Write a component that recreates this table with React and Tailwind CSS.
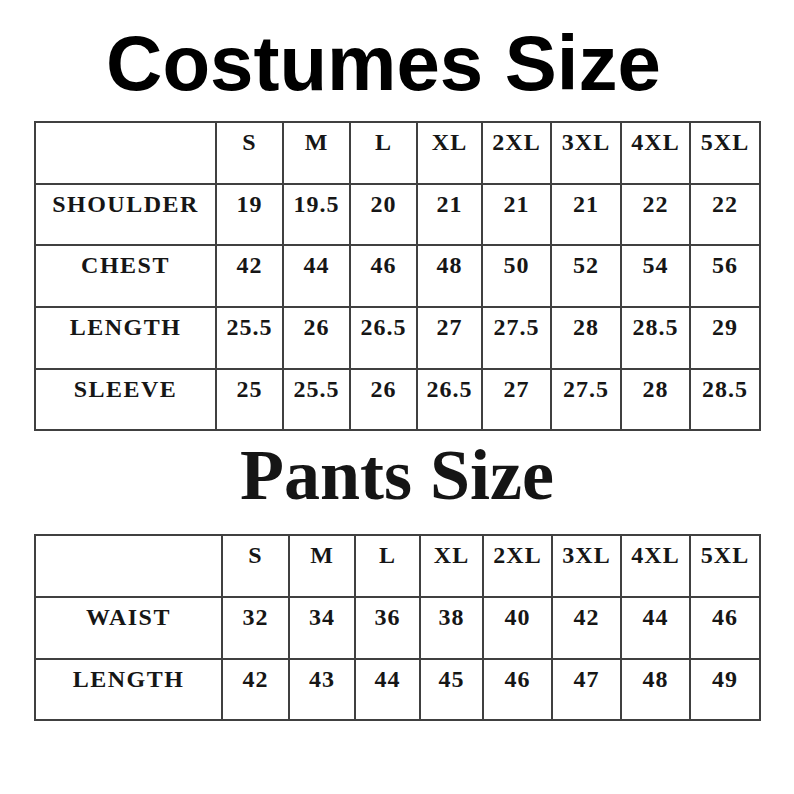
import React from "react";

const sizes = ["S", "M", "L", "XL", "2XL", "3XL", "4XL", "5XL"];

const costumeRows = [
  ["SHOULDER", "19", "19.5", "20", "21", "21", "21", "22", "22"],
  ["CHEST", "42", "44", "46", "48", "50", "52", "54", "56"],
  ["LENGTH", "25.5", "26", "26.5", "27", "27.5", "28", "28.5", "29"],
  ["SLEEVE", "25", "25.5", "26", "26.5", "27", "27.5", "28", "28.5"],
];

const pantsRows = [
  ["WAIST", "32", "34", "36", "38", "40", "42", "44", "46"],
  ["LENGTH", "42", "43", "44", "45", "46", "47", "48", "49"],
];

const Cell = ({ children, label }) => (
  <div
    className={
      label
        ? "border-r-2 border-b-2 border-[#404040] text-center pt-[5px] font-bold text-[24px] leading-[28px] tracking-[1.5px]"
        : "border-r-2 border-b-2 border-[#404040] text-center pt-[5px] font-bold text-[24px] leading-[28px] tracking-[1px]"
    }
  >
    {children}
  </div>
);

const SizeTable = ({ gridClass, rows }) => (
  <div
    className={`ml-[34px] w-[727px] grid border-l-2 border-t-2 border-[#404040] text-[#161616] font-['Liberation_Serif','Times_New_Roman',serif] ${gridClass}`}
  >
    <Cell></Cell>
    {sizes.map((s) => (
      <Cell key={s}>{s}</Cell>
    ))}
    {rows.map((row, r) =>
      row.map((cell, c) => (
        <Cell key={`${r}-${c}`} label={c === 0}>
          {cell}
        </Cell>
      ))
    )}
  </div>
);

const App = () => {
  return (
    <div className="w-[794px] h-[794px] bg-white overflow-hidden">
      <h1 className="pt-[24px] pr-[27px] text-center text-[78px] leading-[78px] font-bold text-black font-['Liberation_Sans',Arial,sans-serif]">
        Costumes Size
      </h1>
      <div className="mt-[19px]">
        <SizeTable
          gridClass="grid-cols-[181px_67px_67px_67px_65px_69px_70px_69px_70px] grid-rows-[62px_61px_62px_62px_61px]"
          rows={costumeRows}
        />
      </div>
      <h2 className="mt-[8px] text-center text-[72px] leading-[72px] font-bold text-[#151515] font-['Liberation_Serif','Times_New_Roman',serif]">
        Pants Size
      </h2>
      <div className="mt-[23px]">
        <SizeTable
          gridClass="grid-cols-[187px_67px_66px_65px_63px_69px_69px_69px_70px] grid-rows-[62px_62px_61px]"
          rows={pantsRows}
        />
      </div>
    </div>
  );
};

export default App;
